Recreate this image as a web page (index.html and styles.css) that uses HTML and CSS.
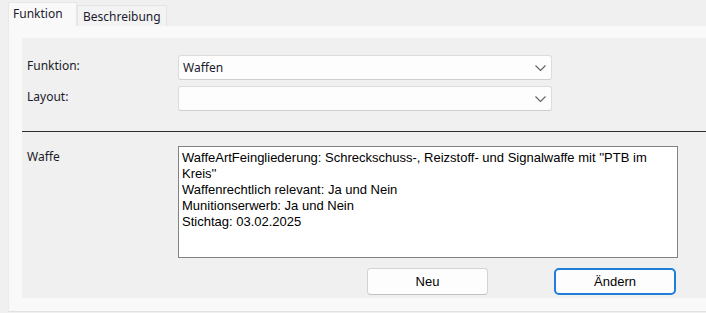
FILE: index.html
```html
<!DOCTYPE html>
<html lang="de">
  <head>
    <meta charset="UTF-8" />
    <title>Funktion</title>
    <link rel="stylesheet" href="styles.css">
  </head>
  <body>
    <div class="tab-strip">
      <div class="tab active">Funktion</div>
      <div class="tab">Beschreibung</div>
    </div>
    <div class="tab-page">
      <div class="panel">
        <div class="form-grid">
          <label class="field-label">Funktion:</label>
          <div class="combo">
            <span class="combo-text">Waffen</span>
            <svg class="chevron" width="11" height="6" viewBox="0 0 11 6"><path d="M0.5 0.5 L5.5 5.5 L10.5 0.5" fill="none" stroke="#606060" stroke-width="1.1"/></svg>
          </div>
          <label class="field-label">Layout:</label>
          <div class="combo">
            <span class="combo-text"></span>
            <svg class="chevron" width="11" height="6" viewBox="0 0 11 6"><path d="M0.5 0.5 L5.5 5.5 L10.5 0.5" fill="none" stroke="#606060" stroke-width="1.1"/></svg>
          </div>
        </div>

        <div class="separator"></div>

        <div class="detail-row">
          <div class="field-label detail-label">Waffe</div>
          <div class="memo">WaffeArtFeingliederung: Schreckschuss-, Reizstoff- und Signalwaffe mit ''PTB im Kreis''<br>Waffenrechtlich relevant: Ja und Nein<br>Munitionserwerb: Ja und Nein<br>Stichtag: 03.02.2025</div>
        </div>

        <div class="button-row">
          <button class="btn">Neu</button>
          <button class="btn default">Ändern</button>
        </div>
      </div>
    </div>
  </body>
</html>
```

FILE: styles.css
```css
* {
  box-sizing: border-box;
  margin: 0;
  padding: 0;
}

body {
  background-color: #f0f0f0;
  font-family: "Noto Sans", "Open Sans", sans-serif;
  font-size: 12px;
  color: #1b1b1b;
  width: 706px;
  height: 313px;
  overflow: hidden;
}

.tab-strip {
  display: flex;
  align-items: flex-end;
  height: 26px;
  padding-left: 8px;
}

.tab {
  height: 21px;
  padding: 0 5px;
  line-height: 21px;
  background-color: #f3f3f3;
  border: 1px solid #e4e4e4;
  border-bottom: none;
  color: #1b1b2e;
}

.tab.active {
  height: 24px;
  width: 69px;
  line-height: 22px;
  background-color: #f9f9f9;
  border-color: #e8e8e8;
  padding: 0 4px;
}

.tab-page {
  margin-left: 8px;
  height: 286px;
  background-color: #f9f9f9;
  border-left: 1px solid #ececec;
  border-bottom: 1px solid #e2e2e2;
  padding: 12px 0 0 13px;
}

.panel {
  background-color: #f0f0f0;
  height: 260px;
  padding: 17px 0 0 5px;
}

.form-grid {
  display: grid;
  grid-template-columns: 151px 374px;
  row-gap: 6px;
  align-items: start;
}

.field-label {
  font-size: 12px;
  line-height: 16px;
  padding-top: 3px;
  color: #1a1a2a;
}

.combo {
  height: 25px;
  background-color: #fdfdfd;
  border: 1px solid #dcdcdc;
  border-bottom-color: #cfcfcf;
  border-radius: 3px;
  display: flex;
  align-items: center;
  justify-content: space-between;
  padding: 0 5px 0 4px;
}

.combo-text {
  font-size: 12px;
  color: #1a1a2a;
}

.separator {
  height: 1px;
  border-top: 1px solid #2e2e2e;
  margin: 20px 0 0 -5px;
}

.detail-row {
  display: flex;
  margin-top: 14px;
}

.detail-label {
  width: 151px;
  padding-top: 3px;
}

.memo {
  width: 500px;
  height: 112px;
  background-color: #ffffff;
  border: 1px solid #828282;
  padding: 3px 3px;
  font-family: "Liberation Sans", Arial, sans-serif;
  font-size: 13px;
  line-height: 16px;
  color: #000000;
}

.button-row {
  display: flex;
  margin-top: 10px;
  padding-left: 340px;
  gap: 66px;
}

.btn {
  width: 121px;
  height: 27px;
  background-color: #fdfdfd;
  border: 1px solid #d3d3d3;
  border-bottom-color: #c2c2c2;
  border-radius: 4px;
  font-family: "Liberation Sans", Arial, sans-serif;
  font-size: 13px;
  color: #000000;
}

.btn.default {
  width: 122px;
  border: 2px solid #1f7fd8;
  border-radius: 5px;
}
```
